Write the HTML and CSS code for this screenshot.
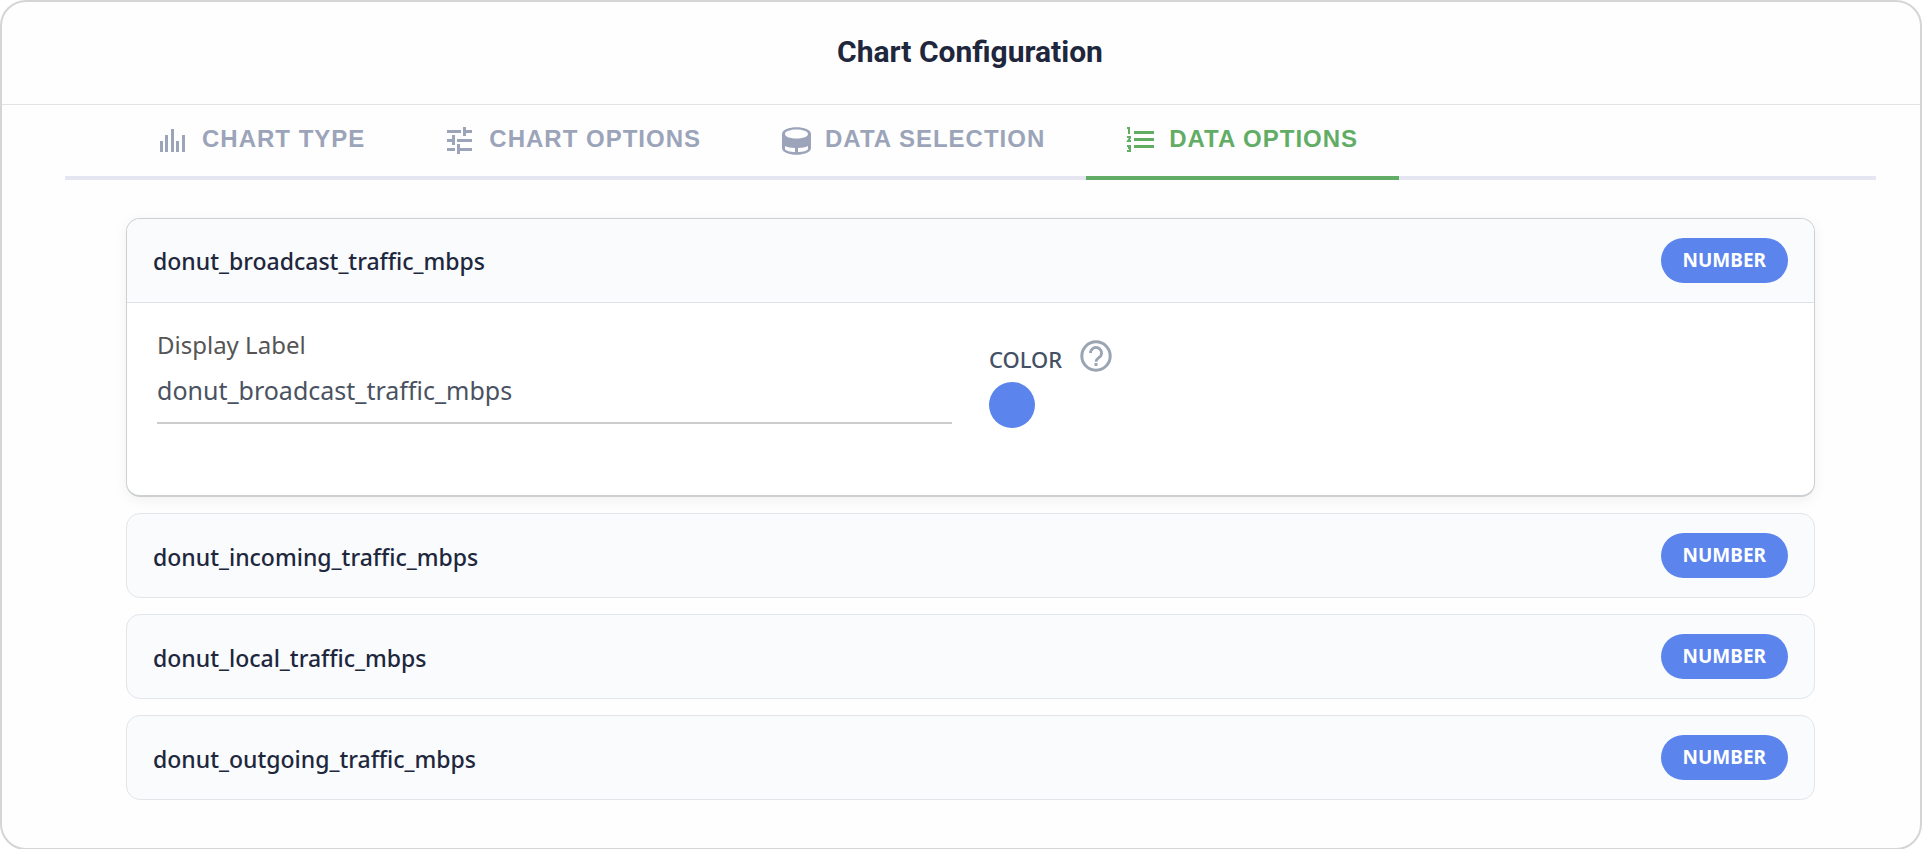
FILE: index.html
```html
<!DOCTYPE html>
<html lang="en">
<head>
<meta charset="utf-8">
<title>Chart Configuration</title>
<link rel="stylesheet" href="styles.css">
</head>
<body>
<main class="dialog">
  <header class="dialog-header"><h1 class="dialog-title">Chart Configuration</h1></header>
  <nav class="tabs" role="tablist" aria-label="Chart configuration">
    <button class="tab" type="button" role="tab" aria-selected="false">
      <svg class="tab-icon" viewBox="0 0 28 28" aria-hidden="true"><path fill="currentColor" d="M1 14h3v11H1zM6 8h3v17H6zM12 2h3v23h-3zM17 14h3v11h-3zM23 8h3v17h-3z"/></svg>
      <span>CHART TYPE</span>
    </button>
    <button class="tab" type="button" role="tab" aria-selected="false">
      <svg class="tab-icon" viewBox="0 0 28 28" aria-hidden="true"><path fill="currentColor" d="M1 3h14v3H1zM17 0h3v3h6v3h-6v3h-3zM1 12h5V8h3v10H6v-3H1zM11 12h15v3H11zM1 21h8v3H1zM11 17h3v4h12v3H14v3h-3z"/></svg>
      <span>CHART OPTIONS</span>
    </button>
    <button class="tab" type="button" role="tab" aria-selected="false">
      <svg class="tab-icon" viewBox="0 0 28 28" aria-hidden="true"><path fill="currentColor" fill-rule="evenodd" d="M0 7C0-2 29-2 29 7v14c0 9-29 9-29 0zM3 7c0 6 23 6 23 0S3 1 3 7zM3 19v3c1 2 5 3 10 3v-4c-4 0-8-1-10-2zm23 0c-2 1-6 2-10 2v4c5 0 9-1 10-3z"/></svg>
      <span>DATA SELECTION</span>
    </button>
    <button class="tab tab-active" type="button" role="tab" aria-selected="true">
      <svg class="tab-icon" viewBox="0 0 28 28" aria-hidden="true"><path fill="currentColor" d="M8 4h20v3H8zM8 11h20v3H8zM8 18h20v3H8z"/><path fill="none" stroke="currentColor" stroke-width="2" d="M1 1h2v6M1 10h3v1l-2 3h3M1 19h3v5H1M2 21h2"/></svg>
      <span>DATA OPTIONS</span>
    </button>
  </nav>
  <section class="fields" role="tabpanel" aria-label="Data options">
    <article class="field field-open">
      <header class="field-header"><h2 class="field-name">donut_broadcast_traffic_mbps</h2><span class="type-badge">NUMBER</span></header>
      <div class="field-body">
        <div class="label-group">
          <label class="label-caption" for="display-label">Display Label</label>
          <input class="label-input" id="display-label" type="text" value="donut_broadcast_traffic_mbps">
        </div>
        <div class="color-group">
          <div class="color-heading">
            <label class="color-caption" for="series-color">COLOR</label>
            <button class="help" type="button" aria-label="About color">
              <svg class="help-icon" viewBox="0 0 32 32" aria-hidden="true"><circle cx="16" cy="16" r="14.2" fill="none" stroke="currentColor" stroke-width="3"/><path fill="none" stroke="currentColor" stroke-width="2.800" d="M10.500 13a5.500 5.500 0 1 1 9 4.200c-2 1.600-3.500 2.200-3.500 4.600"/><path fill="currentColor" d="M14.500 23h3v3h-3z"/></svg>
            </button>
          </div>
          <input class="color-swatch" id="series-color" type="color" value="#5b84ec">
        </div>
      </div>
    </article>
    <article class="field">
      <header class="field-header"><h2 class="field-name">donut_incoming_traffic_mbps</h2><span class="type-badge">NUMBER</span></header>
    </article>
    <article class="field">
      <header class="field-header"><h2 class="field-name">donut_local_traffic_mbps</h2><span class="type-badge">NUMBER</span></header>
    </article>
    <article class="field">
      <header class="field-header"><h2 class="field-name">donut_outgoing_traffic_mbps</h2><span class="type-badge">NUMBER</span></header>
    </article>
  </section>
</main>
</body>
</html>
```

FILE: styles.css
```css
* { box-sizing: border-box; }

body {
  margin: 0;
  background: #fff;
  font-family: "Noto Sans", "Open Sans", sans-serif;
  font-variant-ligatures: none;
}

h1, h2 { margin: 0; }

button {
  border: 0;
  padding: 0;
  background: none;
  cursor: pointer;
}

.dialog {
  min-height: 100vh;
  border: 2px solid #d5d5d5;
  border-radius: 26px;
  background: #fefefe;
}

.dialog-header {
  display: flex;
  justify-content: center;
  align-items: center;
  height: 103px;
  padding: 0 0 2px 18px;
  border-bottom: 1px solid #e2e3e5;
}

.dialog-title {
  color: #20263c;
  font: 700 30px/40px Roboto, sans-serif;
}

.tabs {
  display: flex;
  margin: 0 44px 0 63px;
  padding-left: 54px;
  border-bottom: 4px solid #e5e6f1;
}

.tab {
  display: flex;
  align-items: center;
  gap: 15px;
  height: 75px;
  margin-bottom: -4px;
  padding: 0 41px 3px 40px;
  border-bottom: 4px solid transparent;
  color: #9ba4b9;
  font: 700 24px/32px "Liberation Sans", Arial, sans-serif;
  letter-spacing: 1px;
  white-space: nowrap;
}

.tab-active {
  border-color: #62ad66;
  color: #62ad66;
}

.tab-icon {
  width: 28px;
  height: 28px;
  margin-top: 4px;
  overflow: visible;
}

.fields {
  display: flex;
  flex-direction: column;
  gap: 16px;
  margin: 38px 105px 48px 124px;
}

.field {
  border: 1px solid #e2e5ea;
  border-radius: 14px;
  background: #f9fbfd;
}

.field-open {
  border-color: #cdd0d3;
  border-bottom-width: 2px;
  background: #fff;
  box-shadow: 0 3px 14px rgba(0, 0, 0, 0.06);
}

.field-header {
  display: flex;
  justify-content: space-between;
  align-items: center;
  height: 83px;
  padding: 0 26px;
}

.field-open .field-header {
  height: 84px;
  padding-bottom: 1px;
  border-bottom: 1px solid #dfe3e8;
  border-radius: 13px 13px 0 0;
  background: #f9fbfd;
}

.field-name {
  padding-top: 2px;
  color: #20263c;
  font-size: 23px;
  font-weight: 500;
  line-height: 32px;
}

.type-badge {
  padding: 6px 22px 7px;
  border-radius: 23px;
  background: #5b84ec;
  color: #fff;
  font-size: 19px;
  font-weight: 700;
  line-height: 32px;
}

.field-body {
  display: grid;
  grid-template-columns: 795px 1fr;
  gap: 37px;
  height: 192px;
  padding: 25px 30px 0;
}

.label-group {
  display: flex;
  flex-direction: column;
}

.label-caption {
  color: #555;
  font-size: 24px;
  line-height: 34px;
}

.label-input {
  height: 62px;
  padding: 0 0 4px;
  border: 0;
  border-bottom: 2px solid #cbcccd;
  outline: 0;
  background: none;
  color: #4a5262;
  font: 400 25px/34px "Noto Sans", "Open Sans", sans-serif;
}

.color-group { padding-top: 12px; }

.color-heading {
  display: flex;
  gap: 18px;
  height: 42px;
}

.color-caption {
  padding-top: 3px;
  color: #445064;
  font-size: 22px;
  font-weight: 500;
  line-height: 32px;
}

.help {
  width: 32px;
  height: 32px;
  color: #9ba4b3;
}

.help-icon {
  display: block;
  width: 32px;
  height: 32px;
}

.color-swatch {
  display: block;
  width: 46px;
  height: 46px;
  padding: 0;
  border: 0;
  border-radius: 50%;
  background: #5b84ec;
  appearance: none;
  overflow: hidden;
}

.color-swatch::-webkit-color-swatch-wrapper { padding: 0; }

.color-swatch::-webkit-color-swatch { border: 0; }
```
